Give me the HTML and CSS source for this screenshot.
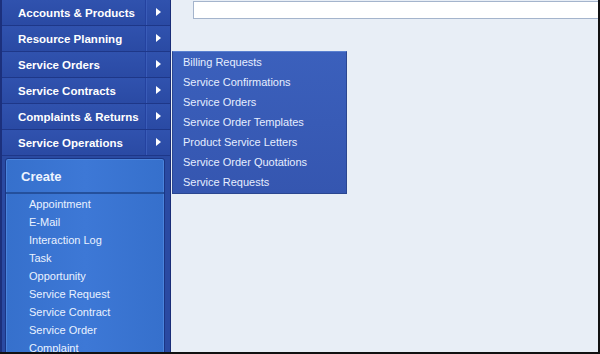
FILE: index.html
```html
<!DOCTYPE html>
<html lang="en">
<head>
    <meta charset="UTF-8">
    <title>Service Orders</title>
    <link rel="stylesheet" href="styles.css">
</head>
<body>

<div class="screen">
    <div class="nav">
        <div class="nav-row"><span class="nav-label">Accounts &amp; Products</span><span class="nav-arrow"></span></div>
        <div class="nav-row"><span class="nav-label">Resource Planning</span><span class="nav-arrow"></span></div>
        <div class="nav-row active"><span class="nav-label">Service Orders</span><span class="nav-arrow"></span></div>
        <div class="nav-row"><span class="nav-label">Service Contracts</span><span class="nav-arrow"></span></div>
        <div class="nav-row"><span class="nav-label">Complaints &amp; Returns</span><span class="nav-arrow"></span></div>
        <div class="nav-row"><span class="nav-label">Service Operations</span><span class="nav-arrow"></span></div>

        <div class="create">
            <div class="create-title">Create</div>
            <ul class="create-list">
                <li>Appointment</li>
                <li>E-Mail</li>
                <li>Interaction Log</li>
                <li>Task</li>
                <li>Opportunity</li>
                <li>Service Request</li>
                <li>Service Contract</li>
                <li>Service Order</li>
                <li>Complaint</li>
            </ul>
        </div>
    </div>

    <div class="main">
        <div class="search-box"></div>
    </div>

    <ul class="flyout">
        <li>Billing Requests</li>
        <li>Service Confirmations</li>
        <li>Service Orders</li>
        <li>Service Order Templates</li>
        <li>Product Service Letters</li>
        <li>Service Order Quotations</li>
        <li>Service Requests</li>
    </ul>
</div>

</body>
</html>
```

FILE: styles.css
```css
body {
    margin: 0;
    font-family: "Liberation Sans", Arial, sans-serif;
    background-color: #000;
}
.screen {
    position: relative;
    display: flex;
    width: 600px;
    height: 354px;
    box-sizing: border-box;
    border-right: 2px solid #111;
    border-bottom: 2px solid #111;
    overflow: hidden;
    background-color: #e8eef6;
}
.nav {
    width: 171px;
    flex-shrink: 0;
    background-color: #2a4aa2;
    border-left: 2px solid #1c307c;
    border-right: 1px solid #1a2d78;
    box-sizing: border-box;
}
.nav-row {
    display: flex;
    align-items: center;
    height: 26px;
    box-sizing: border-box;
    background: linear-gradient(#3052ae, #2a4aa4);
    border-bottom: 1px solid #1e3788;
}
.nav-label {
    flex: 1;
    padding-left: 16px;
    color: #fff;
    font-weight: bold;
    font-size: 11.5px;
    white-space: nowrap;
}
.nav-arrow {
    position: relative;
    width: 24px;
    height: 100%;
    border-left: 1px solid #2442a0;
    box-shadow: inset 1px 0 0 #3a5cb8;
}
.nav-arrow::after {
    content: "";
    position: absolute;
    left: 10px;
    top: 8px;
    border-top: 4px solid transparent;
    border-bottom: 4px solid transparent;
    border-left: 5px solid #fff;
}
.create {
    margin: 2px 5px 0 3px;
    height: 220px;
    background: linear-gradient(90deg, #3670cc, #3d78d6 50%, #3670cc);
    border: 1px solid #1a3584;
    border-radius: 3px;
    box-shadow: inset 0 0 0 1px #4a84dc;
}
.create-title {
    height: 33px;
    line-height: 35px;
    padding-left: 15px;
    color: #eef4ff;
    font-weight: bold;
    font-size: 13px;
    border-bottom: 2px solid #24509c;
}
.create-list {
    list-style: none;
    margin: 0;
    padding: 1px 0 0 23px;
}
.create-list li {
    height: 18px;
    line-height: 18px;
    color: #eaf2ff;
    font-size: 11px;
}
.main {
    flex: 1;
    padding: 1px 0 0 22px;
}
.search-box {
    height: 16px;
    background-color: #fff;
    border: 1px solid #a4b4cc;
    border-right: none;
}
.flyout {
    position: absolute;
    left: 172px;
    top: 51px;
    width: 175px;
    margin: 0;
    padding: 0 0 1px 0;
    list-style: none;
    background: linear-gradient(#3b60bc, #3556b0);
    border: 1px solid #2a4690;
    border-top-color: #5a80d0;
    box-sizing: border-box;
}
.flyout li {
    height: 20px;
    line-height: 20px;
    padding-left: 10px;
    color: #e6eeff;
    font-size: 11px;
    white-space: nowrap;
}
```
